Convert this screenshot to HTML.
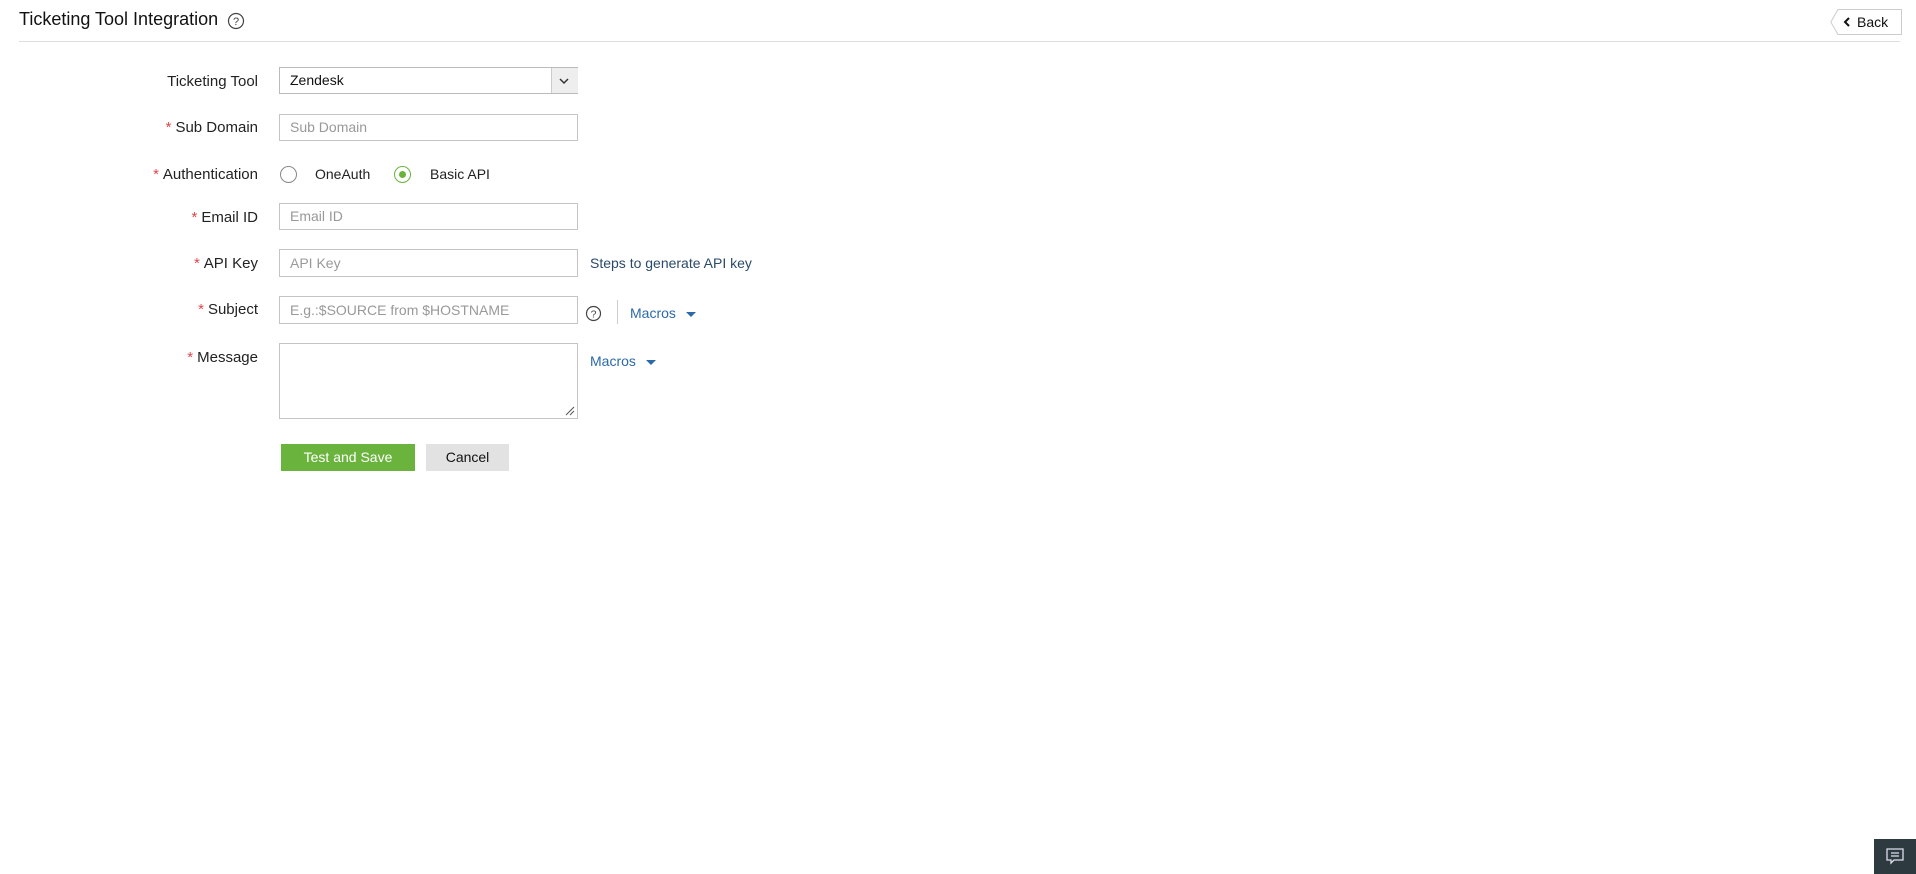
<!DOCTYPE html>
<html><head><meta charset="utf-8"><style>
body{margin:0;width:1916px;height:874px;background:#fff;font-family:"Liberation Sans",sans-serif;color:#222;position:relative;overflow:hidden}
.a{position:absolute}
.t{font-size:18px;left:19px;top:9px;color:#111}
.lbl{position:absolute;right:1658px;font-size:15px;color:#222;white-space:nowrap}
.lbl b{color:#e0464a;font-weight:normal;margin-right:4px}
.inp{position:absolute;left:279px;width:299px;border:1px solid #c4c4c4;background:#fff;box-sizing:border-box;font-size:14px;color:#999;padding-left:10px}
.link{color:#2a6aaa;font-size:14px}
.caret{display:inline-block;width:0;height:0;border-left:5px solid transparent;border-right:5px solid transparent;border-top:5px solid #2a6aaa;margin-left:10px;vertical-align:middle}
</style></head><body>
<div class="a t">Ticketing Tool Integration</div>
<svg class="a" style="left:227px;top:12px" width="18" height="18" viewBox="0 0 18 18"><circle cx="9" cy="9" r="7.5" fill="none" stroke="#444" stroke-width="1.2"/><text x="9" y="13" font-size="11" text-anchor="middle" fill="#444" font-family="Liberation Sans">?</text></svg>
<div class="a" style="left:19px;top:41px;width:1881px;height:1px;background:#ddd"></div>
<svg class="a" style="left:1830px;top:9px" width="72" height="26"><path d="M8 .5H71.5V25.5H8L.8 13Z" fill="#fff" stroke="#ccc"/><path d="M19 9l-4 4 4 4" fill="none" stroke="#111" stroke-width="2"/><text x="27" y="18" font-size="14" fill="#111" font-family="Liberation Sans">Back</text></svg>

<div class="lbl" style="top:73px">Ticketing Tool</div>
<div class="inp" style="top:67px;height:27px;line-height:25px;color:#111;border-color:#bbb">Zendesk</div>
<div class="a" style="left:551px;top:68px;width:26px;height:25px;background:#eee;border-left:1px solid #ccc"></div>
<svg class="a" style="left:558px;top:76px" width="12" height="10"><path d="M2 3l4 4 4-4" fill="none" stroke="#333" stroke-width="1.5"/></svg>

<div class="lbl" style="top:119px"><b>*</b>Sub Domain</div>
<div class="inp" style="top:114px;height:27px;line-height:25px">Sub Domain</div>

<div class="lbl" style="top:166px"><b>*</b>Authentication</div>
<div class="a" style="left:280px;top:166px;width:15px;height:15px;border:1.5px solid #888;border-radius:50%"></div>
<div class="a" style="left:315px;top:166px;font-size:14px">OneAuth</div>
<div class="a" style="left:394px;top:166px;width:15px;height:15px;border:1.5px solid #6ab33d;border-radius:50%"></div>
<div class="a" style="left:399px;top:171px;width:7px;height:7px;background:#6ab33d;border-radius:50%"></div>
<div class="a" style="left:430px;top:166px;font-size:14px">Basic API</div>

<div class="lbl" style="top:209px"><b>*</b>Email ID</div>
<div class="inp" style="top:203px;height:27px;line-height:25px">Email ID</div>

<div class="lbl" style="top:255px"><b>*</b>API Key</div>
<div class="inp" style="top:249px;height:28px;line-height:26px">API Key</div>
<div class="a link" style="left:590px;top:255px;color:#2b4a6a">Steps to generate API key</div>

<div class="lbl" style="top:301px"><b>*</b>Subject</div>
<div class="inp" style="top:296px;height:28px;line-height:26px">E.g.:$SOURCE from $HOSTNAME</div>
<svg class="a" style="left:585px;top:305px" width="17" height="17"><circle cx="8.5" cy="8.5" r="7" fill="none" stroke="#444" stroke-width="1.2"/><text x="8.5" y="12.5" font-size="10.5" text-anchor="middle" fill="#444" font-family="Liberation Sans">?</text></svg>
<div class="a" style="left:617px;top:300px;width:1px;height:24px;background:#ccc"></div>
<div class="a link" style="left:630px;top:305px">Macros<span class="caret"></span></div>

<div class="lbl" style="top:349px"><b>*</b>Message</div>
<div class="inp" style="top:343px;height:76px"></div>
<svg class="a" style="left:564px;top:405px" width="12" height="12"><path d="M2 10L10 2M6 10L10 6" stroke="#555" stroke-width="1"/></svg>
<div class="a link" style="left:590px;top:353px">Macros<span class="caret"></span></div>

<div class="a" style="left:281px;top:444px;width:134px;height:27px;background:#6ab33d;color:#fff;font-size:14px;text-align:center;line-height:27px">Test and Save</div>
<div class="a" style="left:426px;top:444px;width:83px;height:27px;background:#e2e2e2;color:#111;font-size:14px;text-align:center;line-height:27px">Cancel</div>

<div class="a" style="left:1874px;top:839px;width:42px;height:35px;background:#2d3a40"></div>
<svg class="a" style="left:1885px;top:847px" width="20" height="18"><path d="M2 2H18V13H9L6 16V13H2Z" fill="none" stroke="#dde" stroke-width="1.3"/><path d="M6 6H14M6 9H14" stroke="#dde" stroke-width="1.3"/></svg>
</body></html>
